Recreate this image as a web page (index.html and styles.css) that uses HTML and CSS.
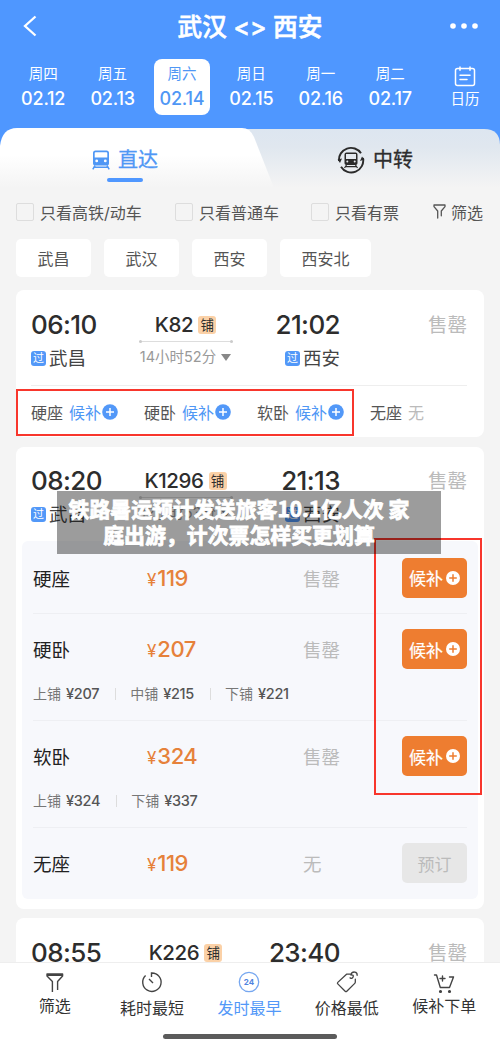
FILE: index.html
```html
<!DOCTYPE html>
<html lang="zh-CN">
<head>
<meta charset="utf-8">
<title>武汉 - 西安</title>
<link rel="stylesheet" href="styles.css">
</head>
<body>
<div class="app">
  <header class="header">
    <div class="titlebar">
      <svg class="back" width="16" height="22" viewBox="0 0 16 22"><path d="M13.500 1.500 3 11l10.500 9.500" fill="none" stroke="#fff" stroke-width="2.3"/></svg>
      <h1 class="title">武汉 &lt;&gt; 西安</h1>
      <svg class="more" width="30" height="8" viewBox="0 0 30 8" fill="#fff"><circle cx="4" cy="4" r="2.8"/><circle cx="15" cy="4" r="2.8"/><circle cx="26" cy="4" r="2.8"/></svg>
    </div>
    <nav class="dates">
      <div class="date"><span class="dow">周四</span><span class="day">02.12</span></div>
      <div class="date"><span class="dow">周五</span><span class="day">02.13</span></div>
      <div class="date selected"><span class="dow">周六</span><span class="day">02.14</span></div>
      <div class="date"><span class="dow">周日</span><span class="day">02.15</span></div>
      <div class="date"><span class="dow">周一</span><span class="day">02.16</span></div>
      <div class="date"><span class="dow">周二</span><span class="day">02.17</span></div>
      <div class="calendar">
        <svg width="22" height="21" viewBox="0 0 22 21" fill="none" stroke="#fff" stroke-width="1.5" stroke-linecap="round"><rect x="1.5" y="2.5" width="19" height="17" rx="2"/><path d="M6 .9v3.4M16 .9v3.4M6 9.2h10M6 13.4h7"/></svg>
        <span>日历</span>
      </div>
    </nav>
  </header>

  <section class="tabs">
    <svg class="tabs-bg" width="500" height="60" viewBox="0 0 500 60">
      <defs>
        <linearGradient id="g1" x1="0" y1="0" x2="0" y2="1"><stop offset="0" stop-color="#dde6f0"/><stop offset=".3" stop-color="#e0e7ef"/><stop offset="1" stop-color="#f4f4f4"/></linearGradient>
        <linearGradient id="g2" x1="0" y1="0" x2="0" y2="1"><stop offset=".45" stop-color="#fff"/><stop offset="1" stop-color="#f4f4f4"/></linearGradient>
      </defs>
      <path d="M230 1H484Q500 1 500 17V60H230Z" fill="url(#g1)"/>
      <path d="M0 60V18Q2 0 17 0H242Q250 0 254 9L274 60Z" fill="url(#g2)"/>
    </svg>
    <div class="tab active">
      <svg width="18" height="20" viewBox="0 0 18 20"><path fill="#4f97f5" fill-rule="evenodd" d="M3.500.500h11Q17 .5 17 3v10.500q0 2-2 2H3q-2 0-2-2V3Q1 .5 3.500.500ZM3.500 2.200q-.8 0-.8.8v4.500h12.600V3q0-.8-.8-.8ZM4.700 9.500a1.400 1.400 0 1 0 0 2.800 1.400 1.400 0 0 0 0-2.800Zm8.600 0a1.400 1.400 0 1 0 0 2.800 1.400 1.400 0 0 0 0-2.800Z"/><path d="M3 15.500.8 19.300M15 15.500l2.200 3.800M2.500 17.200h13" stroke="#4f97f5" stroke-width="1.500"/></svg>
      <span>直达</span>
    </div>
    <div class="tab other">
      <svg width="28" height="28" viewBox="0 0 28 28"><g fill="none" stroke="#2b2b2b" stroke-width="1.900"><path d="M2 15A12 12 0 0 1 24 7.300M26 12A12 12 0 0 1 4 20.700"/></g><path d="M.6 13.500 5 12.500 3 17ZM27.400 13.500 23 15l2-4.500Z" fill="#2b2b2b"/><path fill="#2b2b2b" fill-rule="evenodd" d="M9.500 6.500h9q2 0 2 2v8.700q0 1.800-1.800 1.800H9.300q-1.800 0-1.800-1.800V8.500q0-2 2-2Zm-.5 1.500V13h10V8Zm1.300 6.600a1 1 0 1 0 0 2 1 1 0 0 0 0-2Zm7.400 0a1 1 0 1 0 0 2 1 1 0 0 0 0-2Z"/><path d="m9.500 19-2 3M18.500 19l2 3M8.500 20.700h11" stroke="#2b2b2b" stroke-width="1.200"/></svg>
      <span>中转</span>
    </div>
    <i class="underline"></i>
  </section>

  <section class="filters">
    <label class="check c1"><i></i>只看高铁/动车</label>
    <label class="check c2"><i></i>只看普通车</label>
    <label class="check c3"><i></i>只看有票</label>
    <span class="filter"><svg width="13" height="15" viewBox="0 0 13 15"><path d="M1 1h11v1.600L8.300 7v4.800M1 1v1.600L4.700 7v7" fill="none" stroke="#555" stroke-width="1.300" stroke-linejoin="round" stroke-linecap="round"/></svg>筛选</span>
  </section>
  <section class="chips"><span>武昌</span><span>武汉</span><span>西安</span><span class="wide">西安北</span></section>

  <main class="list">
    <article class="card first">
      <div class="trip">
        <div class="from"><b class="time">06:10</b><span class="station"><i class="via">过</i>武昌</span></div>
        <div class="train"><span class="no">K82<i class="berth">铺</i></span><i class="track"></i><span class="dur">14小时52分<i class="tri"></i></span></div>
        <div class="to"><b class="time">21:02</b><span class="station"><i class="via">过</i>西安</span></div>
        <span class="sold">售罄</span>
      </div>
      <div class="seats">
        <span class="seat">硬座 <em>候补</em><svg class="plus" width="16" height="16" viewBox="0 0 16 16"><circle cx="8" cy="8" r="7.800" fill="#5298f8"/><path d="M8 4v8M4 8h8" stroke="#fff" stroke-width="1.500"/></svg></span>
        <span class="seat">硬卧 <em>候补</em><svg class="plus" width="16" height="16" viewBox="0 0 16 16"><circle cx="8" cy="8" r="7.800" fill="#5298f8"/><path d="M8 4v8M4 8h8" stroke="#fff" stroke-width="1.500"/></svg></span>
        <span class="seat">软卧 <em>候补</em><svg class="plus" width="16" height="16" viewBox="0 0 16 16"><circle cx="8" cy="8" r="7.800" fill="#5298f8"/><path d="M8 4v8M4 8h8" stroke="#fff" stroke-width="1.500"/></svg></span>
        <span class="seat">无座 <em class="none">无</em></span>
      </div>
      <i class="mark mark-seats"></i>
    </article>

    <article class="card second">
      <div class="trip">
        <div class="from"><b class="time">08:20</b><span class="station"><i class="via">过</i>武昌</span></div>
        <div class="train"><span class="no">K1296<i class="berth">铺</i></span><i class="track"></i><span class="dur">12小时53分<i class="tri"></i></span></div>
        <div class="to"><b class="time">21:13</b><span class="station"><i class="via">过</i>西安</span></div>
        <span class="sold">售罄</span>
      </div>
      <div class="panel">
        <div class="option">
          <div class="row"><span class="name">硬座</span><span class="price"><small>¥</small>119</span><span class="state">售罄</span><span class="btn">候补<svg width="14" height="14" viewBox="0 0 14 14"><circle cx="7" cy="7" r="7" fill="#fff"/><path d="M7 3.200v7.600M3.200 7h7.600" stroke="#ee7d30" stroke-width="1.500"/></svg></span></div>
        </div>
        <div class="option">
          <div class="row"><span class="name">硬卧</span><span class="price"><small>¥</small>207</span><span class="state">售罄</span><span class="btn">候补<svg width="14" height="14" viewBox="0 0 14 14"><circle cx="7" cy="7" r="7" fill="#fff"/><path d="M7 3.200v7.600M3.200 7h7.600" stroke="#ee7d30" stroke-width="1.500"/></svg></span></div>
          <div class="berths"><span>上铺 <b>¥207</b></span><span>中铺 <b>¥215</b></span><span>下铺 <b>¥221</b></span></div>
        </div>
        <div class="option">
          <div class="row"><span class="name">软卧</span><span class="price"><small>¥</small>324</span><span class="state">售罄</span><span class="btn">候补<svg width="14" height="14" viewBox="0 0 14 14"><circle cx="7" cy="7" r="7" fill="#fff"/><path d="M7 3.200v7.600M3.200 7h7.600" stroke="#ee7d30" stroke-width="1.500"/></svg></span></div>
          <div class="berths"><span>上铺 <b>¥324</b></span><span>下铺 <b>¥337</b></span></div>
        </div>
        <div class="option">
          <div class="row"><span class="name">无座</span><span class="price"><small>¥</small>119</span><span class="state">无</span><span class="btn off">预订</span></div>
        </div>
      </div>
      <i class="mark mark-buttons"></i>
      <div class="caption">铁路暑运预计发送旅客10.1亿人次 家<br>庭出游，计次票怎样买更划算</div>
    </article>

    <article class="card third">
      <div class="trip">
        <div class="from"><b class="time">08:55</b></div>
        <div class="train"><span class="no">K226<i class="berth">铺</i></span></div>
        <div class="to"><b class="time">23:40</b></div>
        <span class="sold">售罄</span>
      </div>
    </article>
  </main>

  <footer class="bottom">
    <div class="menu">
      <div class="item edge"><svg width="22" height="24" viewBox="0 0 22 24" fill="none" stroke="#444" stroke-width="1.400" stroke-linejoin="round"><path d="M13.600 20v-8.500l5-5.500V4H3v2l5.400 5.500V22M3 5.200h15.600"/></svg><span>筛选</span></div>
      <div class="item"><svg width="22" height="24" viewBox="0 0 22 24" fill="none" stroke="#444" stroke-width="1.400"><path d="M10.500 7V3A9.200 9.200 0 1 1 4.600 5.500M8 9l4 4" /></svg><span>耗时最短</span></div>
      <div class="item on"><svg width="22" height="24" viewBox="0 0 22 24"><circle cx="11" cy="12" r="9.700" fill="none" stroke="#76a7f0" stroke-width="1.300"/><text x="11" y="14.800" text-anchor="middle" class="icon-24">24</text></svg><span>发时最早</span></div>
      <div class="item"><svg width="26" height="26" viewBox="0 0 26 26" fill="none" stroke="#444" stroke-width="1.400" stroke-linecap="round" stroke-linejoin="round"><path d="M16.500 4.500h-4L3 13.400q-.8.800 0 1.600l8 8q.9.900 1.800 0l8.600-8.500q.6-.6.600-1.500V10M16.300 8.500q2.800 1.500 3.500-1.500.2-1.700-1.600-1.700M17.300 5.500q.3-3.500 4-3.300 3 .300 2.700 3.500"/></svg><span>价格最低</span></div>
      <div class="item edge"><svg width="22" height="24" viewBox="0 0 22 24" fill="none" stroke="#444" stroke-width="1.400" stroke-linecap="round" stroke-linejoin="round"><path d="M1.500 5h2l3.800 12.500h9.200L20.500 7h-4M7 8.500h5M9.500 6v5"/><circle cx="7.500" cy="21.500" r=".9" fill="#444"/><circle cx="16.500" cy="21.500" r=".9" fill="#444"/></svg><span>候补下单</span></div>
    </div>
    <i class="home"></i>
  </footer>
</div>
</body>
</html>
```
FILE: styles.css
```css
* { box-sizing: border-box; }
body { margin: 0; font-family: Inter, "Noto Sans CJK SC", sans-serif; color: #2d2d2d; background: #f4f4f4; }
i, em { font-style: normal; }
i { display: block; }
svg { display: block; flex: none; }
.app { width: 500px; height: 1045px; display: flex; flex-direction: column; overflow: hidden; background: #f4f4f4; position: relative; }

.header { height: 128px; flex: none; background: #4f97ff; color: #fff; }
.titlebar { height: 52px; display: grid; grid-template-columns: 60px 1fr 60px; align-items: center; }
.back { margin: -2px 0 0 22px; }
.more { margin: -3px 0 0 9px; }
.title { margin: 0; text-align: center; font-size: 24.700px; font-weight: 500; line-height: 54px; -webkit-text-stroke: .6px #fff; white-space: nowrap; }
.dates { display: flex; height: 70px; padding: 7px 0 0 15.200px; }
.date { flex: none; width: 56px; height: 56px; margin-right: 13.400px; border-radius: 8px; display: flex; flex-direction: column; align-items: center; padding-top: 5px; }
.dow { font-size: 14.500px; line-height: 20px; }
.day { font-size: 18px; font-weight: 500; line-height: 30px; letter-spacing: -.2px; }
.selected { background: #fff; color: #4f97f5; }
.calendar { flex: none; width: 48px; margin-left: 9.500px; display: flex; flex-direction: column; align-items: center; font-size: 14.500px; line-height: 22px; gap: 1px; padding-top: 7px; }

.tabs { height: 60px; flex: none; position: relative; display: grid; grid-template-columns: 250px 250px; background: linear-gradient(#4f97ff 50%, #f4f4f4 50%); }
.tabs-bg { position: absolute; left: 0; top: 0; }
.tab { position: relative; height: 64px; display: flex; align-items: center; font-size: 20px; line-height: 64px; }
.active { padding-left: 92px; gap: 8px; color: #4f97f5; -webkit-text-stroke: .3px; }
.other { padding-left: 87px; gap: 8px; -webkit-text-stroke: .3px; }
.underline { position: absolute; left: 107px; top: 50px; width: 36px; height: 3.500px; border-radius: 2px; background: #4f97ff; }

.filters { display: flex; align-items: center; height: 47px; margin-bottom: 2px; flex: none; padding-left: 16px; font-size: 16px; color: #555; white-space: nowrap; }
.check { display: flex; align-items: center; gap: 6px; }
.check i { width: 18px; height: 18px; border: 1.500px solid #ddd; border-radius: 2px; }
.c1 { width: 159px; }
.c2 { width: 136px; }
.c3 { width: 122px; }
.filter { display: flex; align-items: center; gap: 5px; }
.chips { height: 53px; flex: none; display: flex; gap: 13px; padding: 2px 16px 0; font-size: 16px; color: #555; }
.chips span { width: 75px; height: 38px; line-height: 40px; text-align: center; background: #fff; border-radius: 5px; }
.chips .wide { width: 91px; }

.list { display: flex; flex-direction: column; gap: 10px; padding: 0 16px; }
.card { background: #fff; border-radius: 8px; position: relative; flex: none; }
.first { height: 147px; }
.second { height: 462px; }
.third { height: 60px; margin-top: -1px; }
.trip { height: 94px; display: grid; grid-template-columns: 80px 149px 80px 1fr; padding: 18px 17px 0 15px; }
.second .trip { padding-top: 17px; }
.from, .to, .train { display: flex; flex-direction: column; }
.to { align-items: flex-end; }
.train { align-items: center; }
.time { font-size: 26px; font-weight: 500; line-height: 34px; white-space: nowrap; letter-spacing: -.6px; }
.station { display: flex; align-items: center; gap: 3px; font-size: 18.500px; line-height: 32px; color: #444; white-space: nowrap; }
.via { width: 15px; height: 15px; border-radius: 3px; background: #5298f8; color: #fff; font-size: 11px; line-height: 15px; text-align: center; }
.no { display: flex; align-items: center; gap: 5px; font-size: 20.500px; font-weight: 500; line-height: 33px; letter-spacing: -.4px; }
.berth { width: 18px; height: 18px; background: #fbd1a7; border-radius: 3px; font-size: 13.500px; font-weight: 400; line-height: 18px; text-align: center; letter-spacing: 0; }
.track { width: 94px; height: 1px; background: #ddd; display: flex; justify-content: space-between; align-items: center; }
.track::before, .track::after { content: ""; flex: none; width: 3px; height: 3px; border-radius: 50%; background: #ccc; }
.dur { display: flex; align-items: center; gap: 5px; font-size: 14.500px; line-height: 30px; color: #999; white-space: nowrap; }
.tri { border: 5px solid transparent; border-top: 7px solid #888; border-bottom: 0; }
.sold { text-align: right; font-size: 19.500px; line-height: 34px; color: #bbb; }
.seats { display: flex; margin: 1px 17px 0 15px; border-top: 1px solid #eee; height: 53px; align-items: center; color: #555; }
.seat { width: 113px; flex: none; display: flex; align-items: center; gap: 6px; font-size: 16px; white-space: nowrap; }
.seat em { color: #4f97f5; }
.seat .none { color: #bbb; }
.plus { margin-left: -5px; }
.mark { position: absolute; border: 2px solid #f8362c; }
.mark-seats { left: 0; top: 99px; width: 338px; height: 47px; }
.mark-buttons { left: 358px; top: 91px; width: 108px; height: 257px; }

.panel { margin: 0 6px; height: 358px; background: #f7f8fc; border-radius: 6px; padding: 0 11px; }
.option { border-bottom: 1px solid #eeeff3; }
.option:last-child { border: 0; }
.row { display: grid; grid-template-columns: 114px 156px 99px 65px; height: 72px; align-items: center; padding-top: 1px; }
.option + .option .row { padding-top: 0; height: 70px; }
.name { font-size: 18.500px; color: #222; }
.price { display: flex; align-items: baseline; gap: 1.500px; font-size: 22px; font-weight: 500; color: #e6813a; letter-spacing: -.5px; }
.price small { font-size: 17px; font-weight: 400; }
.state { font-size: 18.500px; color: #bbb; }
.btn { height: 40px; border-radius: 5px; background: #ee7d30; color: #fff; display: flex; align-items: center; justify-content: center; gap: 3px; font-size: 17px; white-space: nowrap; -webkit-text-stroke: .2px; }
.off { background: #e7e7e7; color: #bbb; -webkit-text-stroke: 0; }
.berths { display: flex; height: 36px; padding-bottom: 17px; line-height: 19px; font-size: 14px; color: #777; }
.berths b { font-weight: 500; color: #555; font-size: 14.500px; letter-spacing: -.3px; }
.berths span { display: flex; gap: 5px; align-items: center; }
.berths span + span::before { content: ""; width: 1px; height: 12px; background: #ddd; margin: 0 9px 0 16px; }
.caption { position: absolute; left: 41px; top: 44px; width: 384px; height: 63px; padding: 4px 20px 0 0; background: rgba(0, 0, 0, .39); color: #fff; font-size: 20.900px; font-weight: 700; line-height: 26px; text-align: center; white-space: nowrap; font-family: "Noto Sans CJK SC", sans-serif; -webkit-text-stroke: .8px #fff; }

.bottom { position: absolute; left: 0; bottom: 0; width: 500px; height: 83px; background: #fff; border-top: 1px solid #eee; }
.menu { display: grid; grid-template-columns: repeat(5, 97.400px); padding-left: 6px; height: 71px; }
.item { display: flex; flex-direction: column; align-items: center; padding-top: 7px; font-size: 16px; color: #333; }
.item svg { height: 24px; }
.item span { line-height: 28px; }
.edge span { margin-top: -2px; }
.on { color: #5298f8; }
.icon-24 { font: 700 8px Inter, sans-serif; fill: #4f83e0; }
.home { width: 174px; height: 5px; border-radius: 3px; background: #5b5b5b; margin: 0 auto; }
```
